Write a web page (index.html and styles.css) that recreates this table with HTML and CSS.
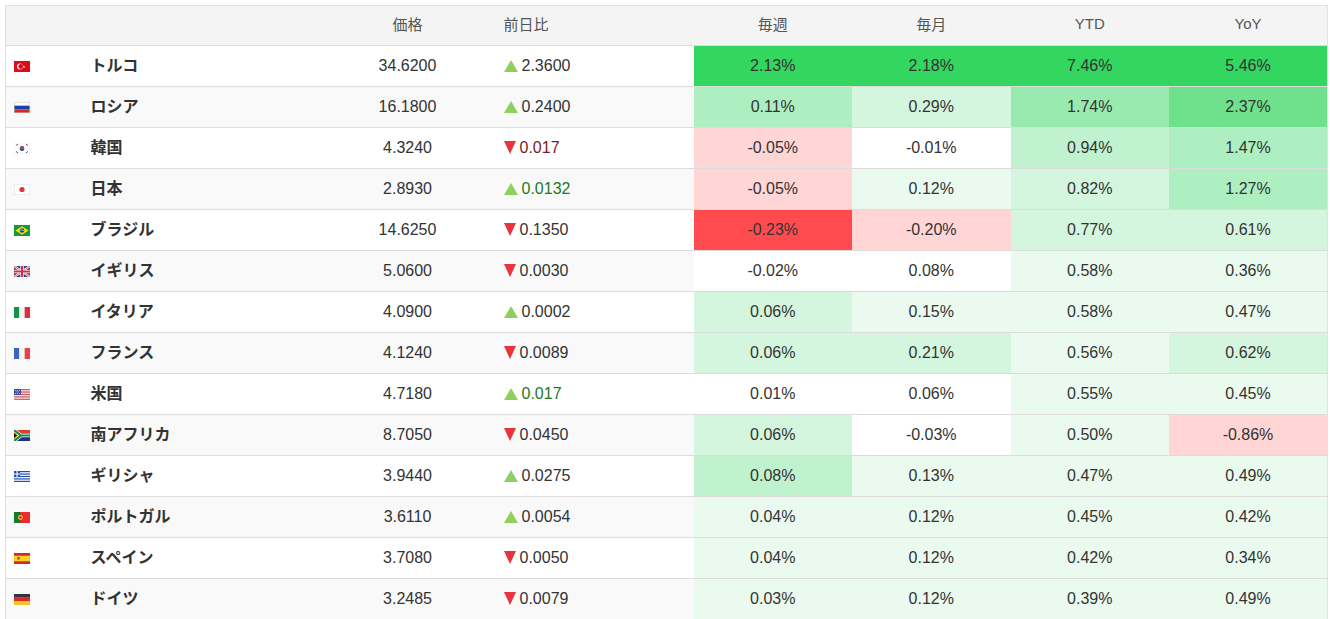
FILE: index.html
```html
<!DOCTYPE html>
<html lang="ja">
<head>
<meta charset="utf-8">
<title>国債利回り</title>
<link rel="stylesheet" href="styles.css">
</head>
<body>
<table class="bonds">
  <colgroup>
    <col class="c-flag"><col class="c-name"><col class="c-price"><col class="c-chg">
    <col><col><col><col>
  </colgroup>
  <thead>
    <tr>
      <th></th><th></th><th class="center">価格</th><th class="left">前日比</th>
      <th class="center">毎週</th><th class="center">毎月</th><th class="center">YTD</th><th class="center">YoY</th>
    </tr>
  </thead>
  <tbody>
    <tr>
      <td class="flag"><svg viewBox="0 0 16 11" width="16" height="11"><rect width="16" height="11" fill="#e30a17"/><circle cx="6" cy="5.5" r="3" fill="#fff"/><circle cx="6.8" cy="5.5" r="2.4" fill="#e30a17"/><polygon points="9.8,4.2 10.2,5.2 11.3,5.3 10.5,6 10.8,7 9.8,6.4 8.9,7 9.2,6 8.4,5.3 9.5,5.2" fill="#fff"/></svg></td>
      <td class="name">トルコ</td><td class="price">34.6200</td>
      <td class="chg"><span class="up"></span>2.3600</td>
      <td class="pct g5">2.13%</td><td class="pct g5">2.18%</td><td class="pct g5">7.46%</td><td class="pct g5">5.46%</td>
    </tr>
    <tr>
      <td class="flag"><svg viewBox="0 0 16 11" width="16" height="11"><rect width="16" height="11" fill="#fff"/><rect y="3.67" width="16" height="3.67" fill="#1c3fae"/><rect y="7.33" width="16" height="3.67" fill="#d52b1e"/><rect x=".25" y=".25" width="15.5" height="10.5" fill="none" stroke="#ccc" stroke-width=".5"/></svg></td>
      <td class="name">ロシア</td><td class="price">16.1800</td>
      <td class="chg"><span class="up"></span>0.2400</td>
      <td class="pct g2">0.11%</td><td class="pct g1">0.29%</td><td class="pct g3">1.74%</td><td class="pct g4">2.37%</td>
    </tr>
    <tr>
      <td class="flag"><svg viewBox="0 0 16 11" width="16" height="11"><rect width="16" height="11" fill="#fff" stroke="#ddd" stroke-width=".5"/><path d="M5.6,5.5 a2.4,2.4 0 0 1 4.8,0z" fill="#cd2e3a"/><path d="M5.6,5.5 a2.4,2.4 0 0 0 4.8,0z" fill="#0047a0"/><g stroke="#333" stroke-width=".8"><line x1="2" y1="2.5" x2="4" y2="1.2"/><line x1="12" y1="1.2" x2="14" y2="2.5"/><line x1="2" y1="8.5" x2="4" y2="9.8"/><line x1="12" y1="9.8" x2="14" y2="8.5"/></g></svg></td>
      <td class="name">韓国</td><td class="price">4.3240</td>
      <td class="chg neg"><span class="down"></span>0.017</td>
      <td class="pct r1">-0.05%</td><td class="pct n">-0.01%</td><td class="pct g1b">0.94%</td><td class="pct g2">1.47%</td>
    </tr>
    <tr>
      <td class="flag"><svg viewBox="0 0 16 11" width="16" height="11"><rect x=".25" y=".25" width="15.5" height="10.5" fill="#fff" stroke="#ddd" stroke-width=".5"/><circle cx="8" cy="5.5" r="2.6" fill="#e8323a"/></svg></td>
      <td class="name">日本</td><td class="price">2.8930</td>
      <td class="chg pos"><span class="up"></span>0.0132</td>
      <td class="pct r1">-0.05%</td><td class="pct g0">0.12%</td><td class="pct g1">0.82%</td><td class="pct g2">1.27%</td>
    </tr>
    <tr>
      <td class="flag"><svg viewBox="0 0 16 11" width="16" height="11"><rect width="16" height="11" fill="#109b3c"/><polygon points="8,1.3 14.5,5.5 8,9.7 1.5,5.5" fill="#fedf00"/><circle cx="8" cy="5.5" r="2.3" fill="#1e3f8a"/><path d="M5.9,5 q2.1,-0.6 4.2,0.8" stroke="#fff" stroke-width=".6" fill="none"/></svg></td>
      <td class="name">ブラジル</td><td class="price">14.6250</td>
      <td class="chg"><span class="down"></span>0.1350</td>
      <td class="pct r3">-0.23%</td><td class="pct r1">-0.20%</td><td class="pct g1">0.77%</td><td class="pct g1">0.61%</td>
    </tr>
    <tr>
      <td class="flag"><svg viewBox="0 0 16 11" width="16" height="11"><rect width="16" height="11" fill="#2b3d8f"/><path d="M0,0 L16,11 M16,0 L0,11" stroke="#fff" stroke-width="2.2"/><path d="M0,0 L16,11 M16,0 L0,11" stroke="#d6303c" stroke-width=".8"/><path d="M8,0 V11 M0,5.5 H16" stroke="#fff" stroke-width="3.4"/><path d="M8,0 V11 M0,5.5 H16" stroke="#d6303c" stroke-width="2"/></svg></td>
      <td class="name">イギリス</td><td class="price">5.0600</td>
      <td class="chg"><span class="down"></span>0.0030</td>
      <td class="pct n">-0.02%</td><td class="pct n">0.08%</td><td class="pct g0">0.58%</td><td class="pct g0">0.36%</td>
    </tr>
    <tr>
      <td class="flag"><svg viewBox="0 0 16 11" width="16" height="11"><rect width="5.33" height="11" fill="#159245"/><rect x="5.33" width="5.34" height="11" fill="#f4f4f4"/><rect x="10.67" width="5.33" height="11" fill="#d8303c"/></svg></td>
      <td class="name">イタリア</td><td class="price">4.0900</td>
      <td class="chg"><span class="up"></span>0.0002</td>
      <td class="pct g1">0.06%</td><td class="pct g0">0.15%</td><td class="pct g0">0.58%</td><td class="pct g0">0.47%</td>
    </tr>
    <tr>
      <td class="flag"><svg viewBox="0 0 16 11" width="16" height="11"><rect width="5.33" height="11" fill="#3a63c4"/><rect x="5.33" width="5.34" height="11" fill="#f4f4f4"/><rect x="10.67" width="5.33" height="11" fill="#e8414a"/></svg></td>
      <td class="name">フランス</td><td class="price">4.1240</td>
      <td class="chg"><span class="down"></span>0.0089</td>
      <td class="pct g1">0.06%</td><td class="pct g1">0.21%</td><td class="pct g0">0.56%</td><td class="pct g1">0.62%</td>
    </tr>
    <tr>
      <td class="flag"><svg viewBox="0 0 16 11" width="16" height="11"><rect width="16" height="11" fill="#fff"/><g fill="#c9404a"><rect y="0" width="16" height=".85"/><rect y="1.7" width="16" height=".85"/><rect y="3.4" width="16" height=".85"/><rect y="5.1" width="16" height=".85"/><rect y="6.8" width="16" height=".85"/><rect y="8.5" width="16" height=".85"/><rect y="10.2" width="16" height=".8"/></g><rect width="7" height="5.95" fill="#3b4a9c"/><g fill="#fff"><rect x="1" y="1" width=".8" height=".8"/><rect x="3" y="1" width=".8" height=".8"/><rect x="5" y="1" width=".8" height=".8"/><rect x="2" y="2.5" width=".8" height=".8"/><rect x="4" y="2.5" width=".8" height=".8"/><rect x="1" y="4" width=".8" height=".8"/><rect x="3" y="4" width=".8" height=".8"/><rect x="5" y="4" width=".8" height=".8"/></g></svg></td>
      <td class="name">米国</td><td class="price">4.7180</td>
      <td class="chg pos"><span class="up"></span>0.017</td>
      <td class="pct n">0.01%</td><td class="pct n">0.06%</td><td class="pct g0">0.55%</td><td class="pct g0">0.45%</td>
    </tr>
    <tr>
      <td class="flag"><svg viewBox="0 0 16 11" width="16" height="11"><rect width="16" height="5.5" fill="#e03c31"/><rect y="5.5" width="16" height="5.5" fill="#1b2f8f"/><path d="M0,0 L7,5.5 L0,11 M7,5.5 H16" stroke="#fff" stroke-width="3.6" fill="none"/><path d="M0,0 L7,5.5 L0,11 M7,5.5 H16" stroke="#1a8a45" stroke-width="2.2" fill="none"/><polygon points="0,2 4.3,5.5 0,9" fill="#fdb913"/><polygon points="0,3 3.1,5.5 0,8" fill="#111"/></svg></td>
      <td class="name">南アフリカ</td><td class="price">8.7050</td>
      <td class="chg"><span class="down"></span>0.0450</td>
      <td class="pct g1">0.06%</td><td class="pct n">-0.03%</td><td class="pct g0">0.50%</td><td class="pct r1">-0.86%</td>
    </tr>
    <tr>
      <td class="flag"><svg viewBox="0 0 16 11" width="16" height="11"><rect width="16" height="11" fill="#fff"/><g fill="#2a4fae"><rect y="0" width="16" height="1.22"/><rect y="2.44" width="16" height="1.22"/><rect y="4.89" width="16" height="1.22"/><rect y="7.33" width="16" height="1.22"/><rect y="9.78" width="16" height="1.22"/><rect width="6.1" height="6.1"/></g><path d="M3.05,0 V6.1 M0,3.05 H6.1" stroke="#fff" stroke-width="1.1"/></svg></td>
      <td class="name">ギリシャ</td><td class="price">3.9440</td>
      <td class="chg"><span class="up"></span>0.0275</td>
      <td class="pct g1b">0.08%</td><td class="pct g0">0.13%</td><td class="pct g0">0.47%</td><td class="pct g0">0.49%</td>
    </tr>
    <tr>
      <td class="flag"><svg viewBox="0 0 16 11" width="16" height="11"><rect width="16" height="11" fill="#ee2a2a"/><rect width="6.4" height="11" fill="#137a2e"/><circle cx="6.4" cy="5.5" r="2.4" fill="#f6d21b"/><circle cx="6.4" cy="5.5" r="1.4" fill="#e8302f"/></svg></td>
      <td class="name">ポルトガル</td><td class="price">3.6110</td>
      <td class="chg"><span class="up"></span>0.0054</td>
      <td class="pct g0">0.04%</td><td class="pct g0">0.12%</td><td class="pct g0">0.45%</td><td class="pct g0">0.42%</td>
    </tr>
    <tr>
      <td class="flag"><svg viewBox="0 0 16 11" width="16" height="11"><rect width="16" height="11" fill="#d9262e"/><rect y="2.75" width="16" height="5.5" fill="#f8d21c"/><rect x="3.5" y="4" width="2" height="2.6" fill="#b8342b"/></svg></td>
      <td class="name">スペイン</td><td class="price">3.7080</td>
      <td class="chg"><span class="down"></span>0.0050</td>
      <td class="pct g0">0.04%</td><td class="pct g0">0.12%</td><td class="pct g0">0.42%</td><td class="pct g0">0.34%</td>
    </tr>
    <tr>
      <td class="flag"><svg viewBox="0 0 16 11" width="16" height="11"><rect width="16" height="3.67" fill="#333"/><rect y="3.67" width="16" height="3.67" fill="#e1252c"/><rect y="7.33" width="16" height="3.67" fill="#f3c522"/></svg></td>
      <td class="name">ドイツ</td><td class="price">3.2485</td>
      <td class="chg"><span class="down"></span>0.0079</td>
      <td class="pct g0">0.03%</td><td class="pct g0">0.12%</td><td class="pct g0">0.39%</td><td class="pct g0">0.49%</td>
    </tr>
  </tbody>
</table>
</body>
</html>
```

FILE: styles.css
```css
html, body {
  background: #fff;
}
body {
  margin: 5px 2px 0 5px;
  font-family: "Liberation Sans", Arial, "Noto Sans CJK JP", sans-serif;
  font-size: 16px;
  color: #333;
}
.bonds {
  width: 100%;
  border-collapse: collapse;
  table-layout: fixed;
  border: 1px solid #e2e2e2;
  border-bottom: none;
}
.c-flag { width: 75px; }
.c-name { width: 241px; }
.c-price { width: 172px; }
.c-chg { width: 200px; }

.bonds th {
  height: 35px;
  padding: 0 0 4px 0;
  background: #f4f4f4;
  font-weight: normal;
  font-size: 15px;
  color: #555;
  font-family: "Liberation Sans", Arial, "Noto Sans CJK JP", sans-serif;
  border-bottom: 1px solid #dcdcdc;
}
.bonds th.center { text-align: center; }
.bonds th.left { text-align: left; padding-left: 10px; }

.bonds td {
  height: 40px;
  padding: 0;
  border-top: 1px solid #dcdcdc;
  vertical-align: middle;
}
.bonds tbody tr:nth-child(even) { background: #f9f9f9; }

.flag { padding-left: 8px !important; }
.flag svg { display: block; }

.bonds td.name {
  height: 36px;
  padding: 0 0 4px 10px;
  font-weight: bold;
  font-family: "Noto Sans CJK JP", sans-serif;
  font-size: 16px;
  color: #333;
}
.price { text-align: center; }
.chg { padding-left: 10px !important; white-space: nowrap; }
.chg.neg { color: #7d1c1c; }
.chg.pos { color: #1d7a1d; }

.up, .down {
  display: inline-block;
  width: 0;
  height: 0;
  margin-right: 4px;
  vertical-align: -1px;
}
.up {
  border-left: 7px solid transparent;
  border-right: 7px solid transparent;
  border-bottom: 12px solid #8ecf5e;
}
.down {
  border-left: 6.5px solid transparent;
  border-right: 6.5px solid transparent;
  border-top: 13px solid #e8343d;
}

.pct { text-align: center; color: #333; }
.n { background: #fff; }
.g0 { background: #eafaef; }
.g1 { background: #d4f6de; }
.g1b { background: #c1f2cf; }
.g2 { background: #adefc1; }
.g3 { background: #98eaae; }
.g4 { background: #6fe08c; }
.g5 { background: #33d65e; }
.r1 { background: #ffd5d5; }
.r3 { background: #ff4a50; }
```
